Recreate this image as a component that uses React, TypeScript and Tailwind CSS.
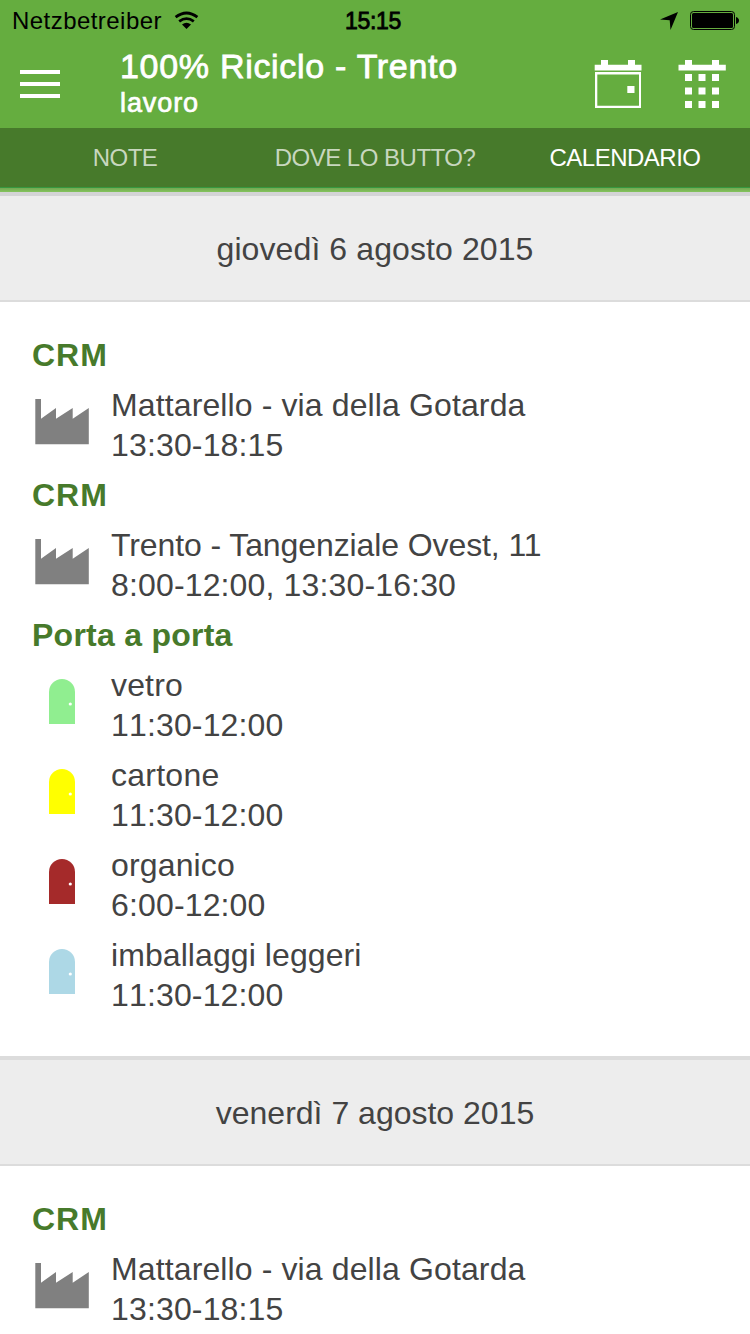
import React from "react";

function Factory() {
  return (
    <svg width="54" height="46" viewBox="0 0 54 46" className="ml-[35px] mt-[4px] block">
      <path d="M.3 0H6v19.700L21 9v10.700L37.700 9v10.700L53.800 9v36.300H.300Z" fill="#808080" />
    </svg>
  );
}

function Door({ color }: { color: string }) {
  return (
    <svg width="26" height="46" viewBox="0 0 26 46" className="ml-[49px] mt-[4px] block">
      <path d="M0 13a13 13 0 0 1 26 0V45H0Z" fill={color} />
      <circle cx="21.300" cy="25" r="1.600" fill="#fff" />
    </svg>
  );
}

function Heading({ children, className = "" }: { children: React.ReactNode; className?: string }) {
  return (
    <h2 className={`h-10 pl-8 text-[32px] leading-10 font-bold text-[#477a2b] ${className}`}>
      <span>{children}</span>
    </h2>
  );
}

function Row({ icon, title, time, className = "" }: { icon: React.ReactNode; title: string; time: string; className?: string }) {
  return (
    <div className="mt-[10px] flex h-20 text-[32px] leading-10 whitespace-nowrap text-[#434343]">
      <div className="w-[111px] shrink-0 pt-[10px]">{icon}</div>
      <div>
        <div className={className}>{title}</div>
        <div className="tracking-[0.150px] [font-kerning:none]">{time}</div>
      </div>
    </div>
  );
}

function Crm({ title, time, className }: { title: string; time: string; className?: string }) {
  return <Row icon={<Factory />} title={title} time={time} className={className} />;
}

export default function App() {
  return (
    <div className="flex h-[1334px] w-[750px] flex-col overflow-hidden bg-white font-['Liberation_Sans',Arial,sans-serif]">
      <header className="relative z-10 shrink-0 shadow-[0_4px_0_#d4d4d6]">
        <div className="h-32 bg-[#65ad3f]">
          <div className="flex h-10 items-center text-[24px] leading-[42px] text-black">
            <span className="mt-[2px] ml-3 w-[162px] whitespace-nowrap tracking-[0.450px]">Netzbetreiber</span>
            <svg width="26" height="20" viewBox="0 0 26 20" className="-mt-[1px] block" fill="none" stroke="#000" strokeWidth="2.800">
              <path d="M1.600 7.200Q12.500-1.200 23.400 7.200" />
              <path d="M5.200 11.300Q12.500 6 19.800 11.300" />
              <path d="M8 14.600Q12.500 11 17 14.600L12.500 19Z" fill="#000" stroke="none" />
            </svg>
            <span className="mt-[2px] ml-[145px] w-[60px] text-[23px] tracking-[-0.300px] [font-kerning:none] [-webkit-text-stroke:0.800px_black]">15:15</span>
            <svg width="18" height="18" viewBox="0 0 18 18" className="mt-[1px] ml-[255px] block">
              <path d="M18 0 10.500 18 9.700 8.300 0 7.500Z" />
            </svg>
            <svg width="49" height="19" viewBox="0 0 49 19" className="mt-[1px] ml-[12px] block">
              <rect x=".5" y=".5" width="44" height="18" rx="3" fill="none" stroke="#000" />
              <rect x="2" y="2" width="41" height="15" rx="1.500" />
              <path d="M46 6q3 1 3 3.500T46 13Z" />
            </svg>
          </div>
          <div className="flex h-[88px]">
            <div className="ml-5 flex w-[100px] flex-col gap-2 pt-[30px]">
              <div className="h-1 w-10 bg-white" />
              <div className="h-1 w-10 bg-white" />
              <div className="h-1 w-10 bg-white" />
            </div>
            <div className="w-[474px] pt-[6px] whitespace-nowrap text-white">
              <div className="text-[34px] leading-10 tracking-[0.700px] [-webkit-text-stroke:0.800px_white]">100% Riciclo - Trento</div>
              <div className="text-[27px] leading-[34px] tracking-[0.900px] [-webkit-text-stroke:0.700px_white]">lavoro</div>
            </div>
            <svg width="48" height="49" viewBox="0 0 48 49" className="mt-5 block" fill="#fff">
              <path d="M.700 4.700H7V0H14V4.700H34V0H41V4.700H47.500V10.500H.700Z" />
              <path fillRule="evenodd" d="M1 12H47V48H1ZM3.300 14.500V45.700H45V14.500Z" />
              <path d="M33.300 26H40.500V33H33.300Z" />
            </svg>
            <svg width="48" height="49" viewBox="0 0 48 49" className="mt-5 ml-9 block" fill="#fff">
              <path d="M.500 4.700H7V0H14V4.700H34V0H41V4.700H47.800V10.500H.500Z" />
              <path d="M7 14h7v7H7zm13.500 0h7v7h-7zM34 14h7v7h-7zM7 27.500h7v7H7zm13.500 0h7v7h-7zm13.500 0h7v7h-7zM7 41h7v7H7zm13.500 0h7v7h-7zM34 41h7v7h-7z" />
            </svg>
          </div>
        </div>
        <nav className="flex h-[60px] border-b border-[#36973f] bg-[#477a2b] text-[24px] leading-[60px] tracking-[-0.500px] text-[#c8d7bf]">
          <div className="w-[250px] text-center">NOTE</div>
          <div className="w-[250px] text-center">DOVE LO BUTTO?</div>
          <div className="w-[250px] text-center text-white">CALENDARIO</div>
        </nav>
        <div className="h-1 bg-linear-to-b from-[#74a852] to-[#84c45d]" />
      </header>

      <div className="h-[110px] shrink-0 border-b-2 border-[#dcdcdc] bg-[#ededed] text-center text-[32px] leading-[114px] text-[#434343]">
        <span className="tracking-[0.100px]">giovedì 6 agosto 2015</span>
      </div>
      <section className="h-[754px] shrink-0 pt-[33px]">
        <Heading className="tracking-[1px]">CRM</Heading>
        <Crm title="Mattarello - via della Gotarda" time="13:30-18:15" className="tracking-[0.120px]" />
        <Heading className="mt-[10px] tracking-[1px]">CRM</Heading>
        <Crm title="Trento - Tangenziale Ovest, 11" time="8:00-12:00, 13:30-16:30" className="tracking-[-0.100px]" />
        <Heading className="mt-[10px] tracking-[0.250px]">Porta a porta</Heading>
        <Row icon={<Door color="#90ee90" />} title="vetro" time="11:30-12:00" className="tracking-[0.150px]" />
        <Row icon={<Door color="#ffff00" />} title="cartone" time="11:30-12:00" className="tracking-[0.250px]" />
        <Row icon={<Door color="#a52a2a" />} title="organico" time="6:00-12:00" className="tracking-[0.150px]" />
        <Row icon={<Door color="#add8e6" />} title="imballaggi leggeri" time="11:30-12:00" className="tracking-[0.080px]" />
      </section>
      <div className="h-[110px] shrink-0 border-t-4 border-b-2 border-[#dcdcdc] bg-[#ededed] text-center text-[32px] leading-[106px] text-[#434343]">
        <span>venerdì 7 agosto 2015</span>
      </div>
      <section className="shrink-0 pt-[33px]">
        <Heading className="tracking-[1px]">CRM</Heading>
        <Crm title="Mattarello - via della Gotarda" time="13:30-18:15" className="tracking-[0.120px]" />
      </section>
    </div>
  );
}
